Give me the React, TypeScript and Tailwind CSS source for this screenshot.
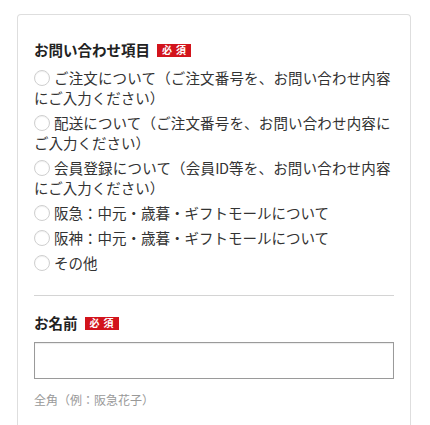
const options: { first: string; rest?: string; justify?: boolean }[] = [
  { first: 'ご注文について（ご注文番号を、お問い合わせ内容', rest: 'にご入力ください）', justify: true },
  { first: '配送について（ご注文番号を、お問い合わせ内容に', rest: 'ご入力ください）' },
  { first: '会員登録について（会員ID等を、お問い合わせ内容', rest: 'にご入力ください）', justify: true },
  { first: '阪急：中元・歳暮・ギフトモールについて' },
  { first: '阪神：中元・歳暮・ギフトモールについて' },
  { first: 'その他' },
]

function Required() {
  return (
    <span className="ml-[7px] inline-flex h-[13px] w-[34px] items-center justify-center bg-[#d2141c] text-[10px] font-bold leading-none tracking-[4px] text-white pl-[4px]">
      必須
    </span>
  )
}

function Radio() {
  return (
    <span className="h-4 w-4 shrink-0 rounded-full border border-[#cfcfcf] bg-white shadow-[inset_0_1px_1px_rgba(0,0,0,0.06)]" />
  )
}

export default function App() {
  return (
    <div
      className="min-h-[425px] bg-white pt-[14px] pl-[17px]"
      style={{ fontFamily: '"Noto Sans CJK JP", "Noto Sans", sans-serif' }}
    >
      <div className="h-[420px] w-[394px] rounded-t-[4px] border border-b-0 border-[#dedede] px-4 pt-[25px]">
        {/* お問い合わせ項目 */}
        <div className="flex items-center text-[14.5px] font-bold leading-[20px] text-[#222]">
          お問い合わせ項目
          <Required />
        </div>

        <div className="mt-[8px] flex flex-col gap-[5px] text-[14.5px] leading-[20px] text-[#333]">
          {options.map((o) => (
            <label key={o.first} className="block">
              <span className="flex items-center gap-[4px]">
                <Radio />
                <span
                  className={
                    o.rest
                      ? 'w-[336px] whitespace-nowrap tracking-[-0.5px] [text-align-last:justify]'
                      : 'whitespace-nowrap'
                  }
                >
                  {o.first}
                </span>
              </span>
              {o.rest && <span className="block">{o.rest}</span>}
            </label>
          ))}
        </div>

        <div className="mt-[22px] border-t border-[#d4d4d4]" />

        {/* お名前 */}
        <div className="mt-[17px] flex items-center text-[14.5px] font-bold leading-[20px] text-[#222]">
          お名前
          <Required />
        </div>
        <div className="mt-[9px] h-[37px] w-full border border-[#9a9a9a] bg-white shadow-[inset_0_1px_1px_rgba(0,0,0,0.08)]" />
        <p className="mt-[12px] text-[12px] leading-[18px] text-[#999]">全角（例：阪急花子）</p>
      </div>
    </div>
  )
}
